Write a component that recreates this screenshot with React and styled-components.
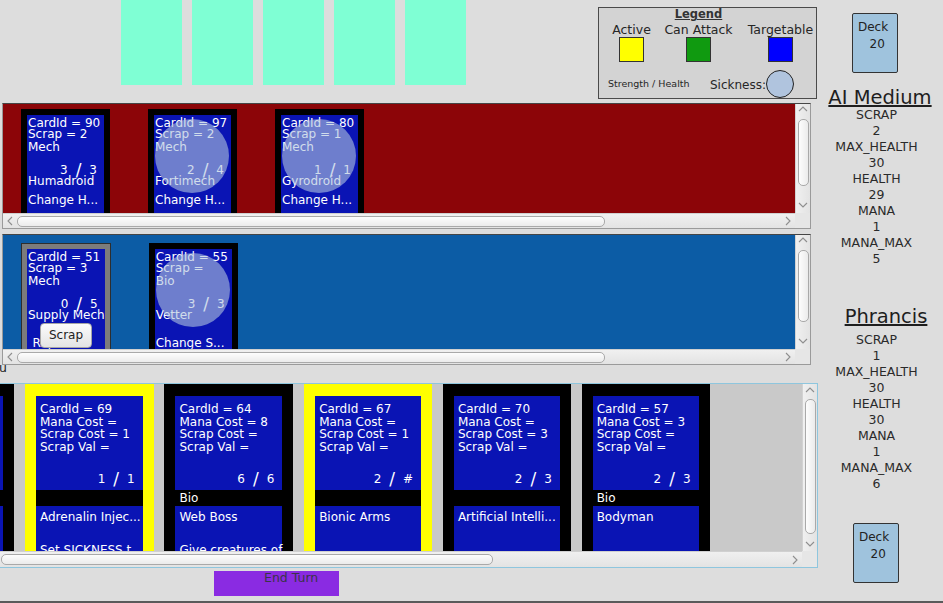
import React from 'react'
import styled, { createGlobalStyle } from 'styled-components'

const GlobalStyle = createGlobalStyle`
  html, body {
    margin: 0;
    padding: 0;
    background: #dddddd;
  }
  body {
    font-family: "DejaVu Sans", "Liberation Sans", sans-serif;
    overflow: hidden;
  }
`

const aiCards = [
    { id: 90, scrap: '2', type: 'Mech', atk: 3, hp: 3, name: 'Humadroid', effect: 'Change H...' },
    { id: 97, scrap: '2', type: 'Mech', atk: 2, hp: 4, name: 'Fortimech', effect: 'Change H...', sick: true },
    { id: 80, scrap: '1', type: 'Mech', atk: 1, hp: 1, name: 'Gyrodroid', effect: 'Change H...', sick: true },
]

const playerCards = [
    { id: 51, scrap: '3', type: 'Mech', atk: 0, hp: 5, name: 'Supply Mech', effect: 'Repair...', effectIndent: 4.5, frame: '#7c7c7c', scrapButton: true },
    { id: 55, scrap: '', type: 'Bio', atk: 3, hp: 3, name: 'Vetter', effect: 'Change S...', sick: true },
]

const handCards = [
    { id: 61, mana: '2', scrapCost: '', scrapVal: '', atk: 1, hp: 2, type: '', name: 'Scrapper', effect: '' },
    { id: 69, mana: '', scrapCost: '1', scrapVal: '', atk: 1, hp: 1, type: '', name: 'Adrenalin Injec...', effect: 'Set SICKNESS t...', active: true },
    { id: 64, mana: '8', scrapCost: '', scrapVal: '', atk: 6, hp: 6, type: 'Bio', name: 'Web Boss', effect: 'Give creatures of' },
    { id: 67, mana: '', scrapCost: '1', scrapVal: '', atk: 2, hp: '#', type: '', name: 'Bionic Arms', effect: '', active: true },
    { id: 70, mana: '', scrapCost: '3', scrapVal: '', atk: 2, hp: 3, type: '', name: 'Artificial Intelli...', effect: '' },
    { id: 57, mana: '3', scrapCost: '', scrapVal: '', atk: 2, hp: 3, type: 'Bio', name: 'Bodyman', effect: '' },
]

const aiStats = [['SCRAP', 2], ['MAX_HEALTH', 30], ['HEALTH', 29], ['MANA', 1], ['MANA_MAX', 5]]
const playerStats = [['SCRAP', 1], ['MAX_HEALTH', 30], ['HEALTH', 30], ['MANA', 1], ['MANA_MAX', 6]]

function Chevron({ dir }) {
    const vertical = dir === 'up' || dir === 'down'
    const pts = {
        up: '1,6 5,2 9,6',
        down: '1,2 5,6 9,2',
        left: '6,1 2,5 6,9',
        right: '2,1 6,5 2,9',
    }[dir]
    return (
        <svg width={vertical ? 10 : 8} height={vertical ? 8 : 10} viewBox={vertical ? '0 0 10 8' : '0 0 8 10'}>
            <polyline points={pts} fill="none" stroke="#8e8e8e" strokeWidth="1.1" />
        </svg>
    )
}

function VScrollBar({ arrowTop, thumbTop, thumbHeight, bottomGap }) {
    return (
        <VScroll>
            <ArrowCell $h={arrowTop}><Chevron dir="up" /></ArrowCell>
            <VThumb $mt={thumbTop} $h={thumbHeight} />
            <Spacer />
            <ArrowCell $h={10} $mb={bottomGap}><Chevron dir="down" /></ArrowCell>
        </VScroll>
    )
}

function HScrollBar({ leftArrow, thumbLeft, thumbWidth, height }) {
    return (
        <HScroll $h={height}>
            {leftArrow && <ArrowCell $w={14}><Chevron dir="left" /></ArrowCell>}
            <HTrack>
                <HThumb $ml={thumbLeft} $w={thumbWidth} />
            </HTrack>
            <ArrowCell $w={14}><Chevron dir="right" /></ArrowCell>
        </HScroll>
    )
}

function StatLine({ atk, hp, pr, mt, mb }) {
    return (
        <StatRow $pr={pr} $mt={mt} $mb={mb}>
            <span>{atk}</span>
            <Slash>/</Slash>
            <span>{hp}</span>
        </StatRow>
    )
}

function BoardCardView({ card, facePt, effectGap }) {
    return (
        <BoardCard $frame={card.frame || '#000'} $outlined={!!card.frame}>
            <CardFace $pt={facePt}>
                <InfoLine>CardId = {card.id}</InfoLine>
                <InfoLine>Scrap = {card.scrap}</InfoLine>
                <InfoLine $mt={1}>{card.type}</InfoLine>
                <StatLine atk={card.atk} hp={card.hp} pr={7} mt={10.3} />
                <TextLine $mt={-1.7}>{card.name}</TextLine>
                <TextLine $mt={effectGap} $pl={card.effectIndent}>{card.effect}</TextLine>
                {card.sick && <SickOverlay />}
            </CardFace>
            {card.scrapButton && <ScrapButton>Scrap</ScrapButton>}
        </BoardCard>
    )
}

function HandCardView({ card }) {
    return (
        <HandCard $active={card.active}>
            <HandUpper>
                <HandLine>CardId = {card.id}</HandLine>
                <HandLine>Mana Cost = {card.mana}</HandLine>
                <HandLine>Scrap Cost = {card.scrapCost}</HandLine>
                <HandLine>Scrap Val = {card.scrapVal}</HandLine>
                <StatLine atk={card.atk} hp={card.hp} pr={8} mt="auto" mb={5} />
            </HandUpper>
            <TypeStripe>{card.type}</TypeStripe>
            <HandLower>
                <HandLine>{card.name}</HandLine>
                <HandLine $mt={21}>{card.effect}</HandLine>
            </HandLower>
        </HandCard>
    )
}

function PlayerInfo({ name, stats, titleMt, titlePad, statsMt }) {
    return (
        <>
            <PlayerName $mt={titleMt} $pl={titlePad[0]} $pr={titlePad[1]}>{name}</PlayerName>
            <Stats $mt={statsMt}>
                {stats.map(([label, value]) => (
                    <React.Fragment key={label}>
                        <div>{label}</div>
                        <div>{value}</div>
                    </React.Fragment>
                ))}
            </Stats>
        </>
    )
}

export default function App() {
    return (
        <>
            <GlobalStyle />
            <Screen>
                <LeftCol>
                    <TopRow>
                        <Slots>
                            {[0, 1, 2, 3, 4].map(i => <Slot key={i} />)}
                        </Slots>
                        <Legend>
                            <LegendTitle>Legend</LegendTitle>
                            <LegendLabel $col={1}>Active</LegendLabel>
                            <LegendLabel $col={2}>Can Attack</LegendLabel>
                            <LegendLabel $col={4}>Targetable</LegendLabel>
                            <Swatch $col={1} $color="#ffff00" />
                            <Swatch $col={2} $color="#109a10" />
                            <Swatch $col={4} $color="#0000ff" />
                            <LegendBottom>
                                <SmallNote>Strength / Health</SmallNote>
                                <SickGroup>
                                    <SickLabel>Sickness:</SickLabel>
                                    <SickDot />
                                </SickGroup>
                            </LegendBottom>
                        </Legend>
                    </TopRow>

                    <Pane $ml={2} $w={809} $vh={109}>
                        <Viewport $bg="#8c0508">
                            <BoardRow $pt={5.3}>
                                {aiCards.map(c => (
                                    <BoardCardView key={c.id} card={c} facePt={2.6} effectGap={7.7} />
                                ))}
                            </BoardRow>
                        </Viewport>
                        <VScrollBar arrowTop={10} thumbTop={5} thumbHeight={67} bottomGap={3} />
                        <HScrollBar leftArrow thumbLeft={0} thumbWidth={588} />
                        <Corner />
                    </Pane>

                    <Pane $ml={2} $mt={5} $w={809} $vh={114}>
                        <Viewport $bg="#0c5ca5">
                            <BoardRow $pt={7.5}>
                                {playerCards.map(c => (
                                    <BoardCardView key={c.id} card={c} facePt={3.4} effectGap={16} />
                                ))}
                            </BoardRow>
                        </Viewport>
                        <VScrollBar arrowTop={10} thumbTop={5} thumbHeight={72} bottomGap={3} />
                        <HScrollBar leftArrow thumbLeft={0} thumbWidth={588} />
                        <Corner />
                    </Pane>

                    <LabelRow>u</LabelRow>

                    <HandPane>
                        <Viewport $bg="#c9c9c9">
                            <HandRow>
                                {handCards.map(c => <HandCardView key={c.id} card={c} />)}
                            </HandRow>
                        </Viewport>
                        <VScrollBar arrowTop={12} thumbTop={3} thumbHeight={135} bottomGap={2.5} />
                        <HScrollBar thumbLeft={1} thumbWidth={492} height={16} />
                        <Corner />
                    </HandPane>

                    <EndTurn>End Turn</EndTurn>
                </LeftCol>

                <RightCol>
                    <Deck $ml={32}>
                        <div>Deck</div>
                        <DeckCount>20</DeckCount>
                    </Deck>
                    <PlayerInfo name="AI Medium" stats={aiStats} titleMt={14.2} titlePad={[0, 3]} statsMt={-2.4} />
                    <PlayerInfo name="Phrancis" stats={playerStats} titleMt={39.7} titlePad={[9, 0]} statsMt={3.3} />
                    <Deck $ml={33} $mt={31.5}>
                        <div>Deck</div>
                        <DeckCount>20</DeckCount>
                    </Deck>
                </RightCol>
            </Screen>
        </>
    )
}

const Screen = styled.div`
    width: 943px;
    height: 603px;
    box-sizing: border-box;
    border-bottom: 2px solid #5a5a5a;
    display: flex;
    overflow: hidden;
`
const LeftCol = styled.div`
    width: 820px;
    flex-shrink: 0;
    display: flex;
    flex-direction: column;
`
const TopRow = styled.div`
    height: 103px;
    display: flex;
    align-items: flex-start;
`
const Slots = styled.div`
    display: flex;
    gap: 10px;
    margin-left: 121px;
`
const Slot = styled.div`
    width: 61px;
    height: 85px;
    background: #7fffd4;
`
const Legend = styled.div`
    margin-left: 132px;
    margin-top: 7px;
    width: 219px;
    height: 92px;
    box-sizing: border-box;
    border: 1px solid #4a4a4a;
    background: #d3d3d3;
    display: grid;
    grid-template-columns: 65px 69px 13px 69px;
    grid-template-rows: 14.5px 14px 25px 1fr;
    color: #262626;
`
const LegendTitle = styled.div`
    grid-column: 2;
    grid-row: 1;
    text-align: center;
    font-size: 11.5px;
    font-weight: bold;
    line-height: 13px;
    text-decoration: underline;
    color: #333;
`
const LegendLabel = styled.div`
    grid-column: ${p => p.$col};
    grid-row: 2;
    text-align: center;
    white-space: nowrap;
    font-size: 12.5px;
    line-height: 14px;
`
const Swatch = styled.div`
    grid-column: ${p => p.$col};
    grid-row: 3;
    justify-self: center;
    width: 25px;
    height: 25px;
    box-sizing: border-box;
    border: 1px solid #333;
    background: ${p => p.$color};
`
const LegendBottom = styled.div`
    grid-column: 1 / -1;
    grid-row: 4;
    display: flex;
    align-items: flex-start;
    padding-left: 9px;
`
const SmallNote = styled.div`
    font-size: 9.5px;
    line-height: 11px;
    margin-top: 16px;
    white-space: nowrap;
`
const SickGroup = styled.div`
    margin-left: auto;
    margin-right: 21px;
    display: flex;
    align-items: flex-start;
`
const SickLabel = styled.div`
    font-size: 12px;
    line-height: 14px;
    margin-top: 16.7px;
`
const SickDot = styled.div`
    width: 28px;
    height: 28px;
    margin-top: 8.5px;
    box-sizing: border-box;
    border: 1px solid #222;
    border-radius: 50%;
    background: #b0c4de;
`
const Pane = styled.div`
    margin-left: ${p => p.$ml || 0}px;
    margin-top: ${p => p.$mt || 0}px;
    width: ${p => p.$w}px;
    box-sizing: border-box;
    border: 1px solid #9a9a9a;
    border-top-color: #454545;
    display: grid;
    grid-template-columns: 1fr 15px;
    grid-template-rows: ${p => p.$vh}px 15px;
    background: #e8e8e8;
`
const HandPane = styled.div`
    width: 818px;
    box-sizing: border-box;
    border: 1px solid #8ec6de;
    border-left: none;
    display: grid;
    grid-template-columns: 1fr 15px;
    grid-template-rows: 167px 16px;
    background: #e8e8e8;
`
const Viewport = styled.div`
    overflow: hidden;
    position: relative;
    background: ${p => p.$bg};
`
const VScroll = styled.div`
    display: flex;
    flex-direction: column;
    align-items: center;
    border-left: 1px solid #d2d2d2;
    background: linear-gradient(90deg, #f0f0f0, #e3e3e3);
`
const HScroll = styled.div`
    display: flex;
    align-items: center;
    height: ${p => p.$h || 15}px;
    box-sizing: border-box;
    border-top: 1px solid #d0d0d0;
    background: linear-gradient(#f0f0f0, #e3e3e3);
`
const ArrowCell = styled.div`
    display: flex;
    align-items: center;
    justify-content: center;
    flex: 0 0 auto;
    width: ${p => (p.$w ? `${p.$w}px` : '100%')};
    height: ${p => (p.$h ? `${p.$h}px` : '100%')};
    margin-bottom: ${p => p.$mb || 0}px;
`
const Spacer = styled.div`
    flex: 1;
`
const VThumb = styled.div`
    width: 11px;
    height: ${p => p.$h}px;
    margin-top: ${p => p.$mt}px;
    box-sizing: border-box;
    border: 1px solid #a9a9a9;
    border-radius: 5px;
    background: linear-gradient(90deg, #fdfdfd, #ebebeb);
`
const HTrack = styled.div`
    flex: 1;
    display: flex;
    align-items: center;
`
const HThumb = styled.div`
    width: ${p => p.$w}px;
    height: 11px;
    margin-left: ${p => p.$ml}px;
    box-sizing: border-box;
    border: 1px solid #a9a9a9;
    border-radius: 5px;
    background: linear-gradient(#fdfdfd, #ebebeb);
`
const Corner = styled.div`
    background: #e6e6e6;
`
const BoardRow = styled.div`
    display: flex;
    gap: 38px;
    padding-left: 18px;
    padding-top: ${p => p.$pt}px;
`
const BoardCard = styled.div`
    position: relative;
    flex: 0 0 89px;
    height: 130px;
    box-sizing: border-box;
    padding: 6px 6px 0;
    background: ${p => p.$frame};
    box-shadow: ${p => (p.$outlined ? 'inset 0 0 0 1px #2e2e2e' : 'none')};
`
const CardFace = styled.div`
    position: relative;
    height: 100%;
    box-sizing: border-box;
    padding: ${p => p.$pt}px 0 0 1px;
    background: #0a14b4;
    color: #fff;
    font-size: 12px;
    white-space: nowrap;
`
const InfoLine = styled.div`
    line-height: 11.5px;
    height: 11.5px;
    margin-top: ${p => p.$mt || 0}px;
`
const TextLine = styled.div`
    position: relative;
    line-height: 12px;
    height: 12px;
    margin-top: ${p => p.$mt || 0}px;
    padding-left: ${p => p.$pl || 0}px;
`
const StatRow = styled.div`
    display: flex;
    justify-content: flex-end;
    align-items: center;
    gap: 8px;
    height: 12.5px;
    line-height: 12.5px;
    padding-right: ${p => p.$pr}px;
    margin-top: ${p => (p.$mt === 'auto' ? 'auto' : `${p.$mt || 0}px`)};
    margin-bottom: ${p => p.$mb || 0}px;
    font-size: 12px;
`
const Slash = styled.span`
    font-size: 17px;
    line-height: 12px;
`
const SickOverlay = styled.div`
    position: absolute;
    top: 4px;
    left: 1px;
    width: 74px;
    height: 74px;
    border-radius: 50%;
    background: rgba(176, 196, 222, 0.6);
`
const ScrapButton = styled.div`
    position: absolute;
    left: 19px;
    top: 80px;
    width: 52px;
    height: 25px;
    box-sizing: border-box;
    border: 1px solid #a6a6a6;
    border-radius: 4px;
    background: linear-gradient(#fbfbfb, #e4e4e4);
    color: #222;
    font-size: 12px;
    line-height: 23px;
    text-align: center;
`
const LabelRow = styled.div`
    height: 18px;
    margin-top: -3.5px;
    margin-bottom: 3.5px;
    margin-left: -1px;
    font-size: 12.5px;
    line-height: 12px;
    color: #222;
`
const HandRow = styled.div`
    display: flex;
    gap: 10.75px;
    margin-left: -113.75px;
`
const HandCard = styled.div`
    flex: 0 0 128px;
    height: 200px;
    box-sizing: border-box;
    padding: 12px 11px 0;
    background: ${p => (p.$active ? '#ffff00' : '#000')};
    display: flex;
    flex-direction: column;
    color: #fff;
    font-size: 12px;
    white-space: nowrap;
`
const HandUpper = styled.div`
    height: 94px;
    box-sizing: border-box;
    padding: 7px 0 0 4px;
    background: #0a14b4;
    display: flex;
    flex-direction: column;
`
const HandLine = styled.div`
    line-height: 12.5px;
    height: 12.5px;
    margin-top: ${p => p.$mt || 0}px;
`
const TypeStripe = styled.div`
    height: 16px;
    box-sizing: border-box;
    padding: 1px 0 0 4px;
    line-height: 15px;
    background: #000;
`
const HandLower = styled.div`
    flex: 1;
    box-sizing: border-box;
    padding: 4.6px 0 0 4px;
    background: #0a14b4;
`
const EndTurn = styled.div`
    margin-left: 214px;
    margin-top: 3px;
    width: 125px;
    height: 25px;
    box-sizing: border-box;
    padding-left: 50px;
    background: #8a2be2;
    color: #3a3448;
    font-size: 12.5px;
    line-height: 14px;
`
const RightCol = styled.div`
    width: 123px;
    flex-shrink: 0;
    box-sizing: border-box;
    padding-top: 13px;
    display: flex;
    flex-direction: column;
    color: #2a2a2a;
`
const Deck = styled.div`
    margin-left: ${p => p.$ml}px;
    margin-top: ${p => p.$mt || 0}px;
    width: 46px;
    height: 60px;
    box-sizing: border-box;
    border: 1px solid #333;
    border-radius: 2px;
    background: #9fc3dd;
    padding: 5px 0 0 5px;
    font-size: 12px;
    line-height: 16.7px;
    color: #222;
`
const DeckCount = styled.div`
    padding-left: 11.5px;
`
const PlayerName = styled.div`
    margin-top: ${p => p.$mt}px;
    padding-left: ${p => p.$pl}px;
    padding-right: ${p => p.$pr}px;
    text-align: center;
    font-size: 19.5px;
    line-height: 22px;
    text-decoration: underline;
    text-decoration-thickness: 1.5px;
    color: #1e1e1e;
    white-space: nowrap;
`
const Stats = styled.div`
    width: 113px;
    margin-top: ${p => p.$mt}px;
    text-align: center;
    font-size: 12.5px;
    line-height: 16px;
`
